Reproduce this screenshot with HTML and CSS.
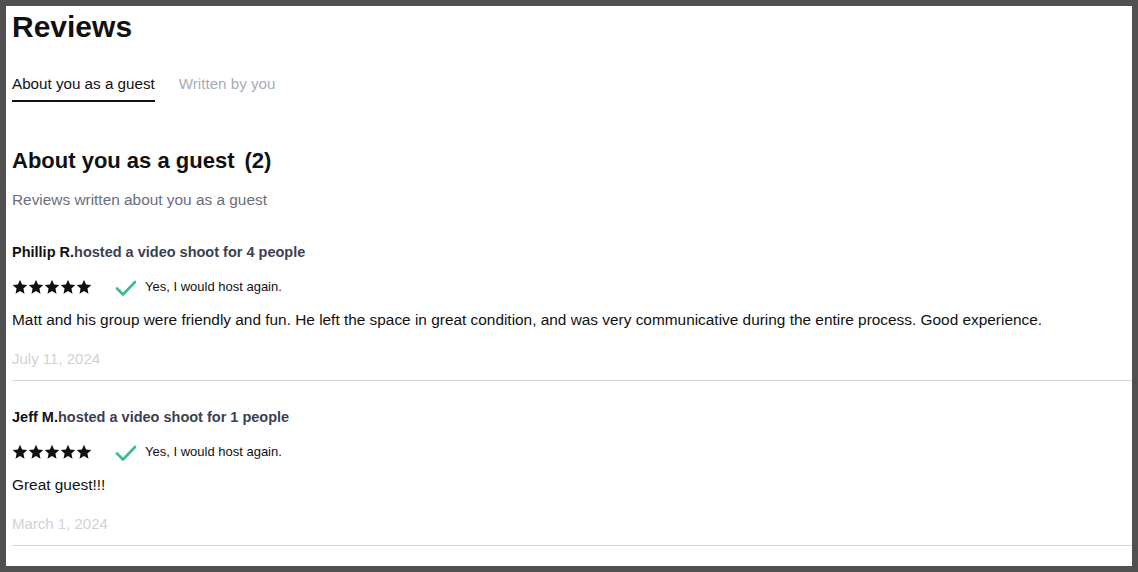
FILE: index.html
```html
<!DOCTYPE html>
<html lang="en">
<head>
<meta charset="utf-8">
<title>Reviews</title>
<link rel="stylesheet" href="styles.css">
</head>
<body>
<main class="page">
  <h1 class="title">Reviews</h1>
  <nav class="tabs">
    <span class="tab active">About you as a guest</span>
    <span class="tab">Written by you</span>
  </nav>
  <h2 class="heading">About you as a guest<span class="count">(2)</span></h2>
  <p class="subtitle">Reviews written about you as a guest</p>

  <article class="review">
    <div class="who"><span class="name">Phillip R.</span>hosted a video shoot for 4 people</div>
    <div class="meta">
      <svg class="stars" width="80" height="16" viewBox="0 0 80 16" aria-hidden="true">
        <g fill="#111">
          <path id="st" d="M8 0.8 L10.1 5.6 L15.3 6.1 L11.4 9.6 L12.5 14.8 L8 12.1 L3.5 14.8 L4.6 9.6 L0.7 6.1 L5.9 5.6 Z"/>
          <use href="#st" x="16"/>
          <use href="#st" x="32"/>
          <use href="#st" x="48"/>
          <use href="#st" x="64"/>
        </g>
      </svg>
      <svg class="check" width="22" height="18" viewBox="0 0 22 18" aria-hidden="true">
        <path d="M2 9.5 L8 15.5 L20 3" fill="none" stroke="#3dba8b" stroke-width="2.6" stroke-linecap="round" stroke-linejoin="round"/>
      </svg>
      <span class="again">Yes, I would host again.</span>
    </div>
    <p class="text">Matt and his group were friendly and fun. He left the space in great condition, and was very communicative during the entire process. Good experience.</p>
    <div class="date">July 11, 2024</div>
  </article>

  <article class="review">
    <div class="who"><span class="name">Jeff M.</span>hosted a video shoot for 1 people</div>
    <div class="meta">
      <svg class="stars" width="80" height="16" viewBox="0 0 80 16" aria-hidden="true">
        <g fill="#111">
          <path id="st2" d="M8 0.8 L10.1 5.6 L15.3 6.1 L11.4 9.6 L12.5 14.8 L8 12.1 L3.5 14.8 L4.6 9.6 L0.7 6.1 L5.9 5.6 Z"/>
          <use href="#st2" x="16"/>
          <use href="#st2" x="32"/>
          <use href="#st2" x="48"/>
          <use href="#st2" x="64"/>
        </g>
      </svg>
      <svg class="check" width="22" height="18" viewBox="0 0 22 18" aria-hidden="true">
        <path d="M2 9.5 L8 15.5 L20 3" fill="none" stroke="#3dba8b" stroke-width="2.6" stroke-linecap="round" stroke-linejoin="round"/>
      </svg>
      <span class="again">Yes, I would host again.</span>
    </div>
    <p class="text">Great guest!!!</p>
    <div class="date">March 1, 2024</div>
  </article>
</main>
</body>
</html>
```
FILE: styles.css
```css
* { box-sizing: border-box; }
html, body { margin: 0; padding: 0; }
body {
  background: #505050;
  padding: 6px;
  font-family: "Liberation Sans", Arial, sans-serif;
  color: #111;
}
.page {
  background: #fff;
  height: 560px;
  padding: 1px 0 0 6px;
  overflow: hidden;
}
.title {
  margin: 0;
  font-size: 30px;
  line-height: 40px;
  font-weight: 700;
}
.tabs {
  display: flex;
  gap: 24px;
  margin-top: 27px;
}
.tab {
  font-size: 15.2px;
  line-height: 20px;
  padding-bottom: 6px;
  color: #a9abb8;
  border-bottom: 2px solid transparent;
}
.tab.active {
  color: #111;
  border-bottom-color: #111;
}
.heading {
  margin: 45px 0 0;
  font-size: 22px;
  line-height: 28px;
  font-weight: 700;
}
.count { margin-left: 10px; }
.subtitle {
  margin: 15px 0 0;
  font-size: 15.4px;
  line-height: 20px;
  color: #6b6e7a;
}
.review {
  padding: 26px 0 11px;
  border-bottom: 1px solid #d4d5db;
}
.subtitle + .review { padding-top: 32px; }
.who {
  font-size: 14.5px;
  line-height: 20px;
  font-weight: 700;
  color: #3c3f50;
}
.name { color: #111; }
.meta {
  display: flex;
  align-items: center;
  height: 20px;
  margin-top: 15px;
}
.stars { display: block; }
.check { display: block; margin-left: 23px; margin-top: 2px; }
.again {
  margin-left: 8px;
  font-size: 13px;
  line-height: 20px;
}
.text {
  margin: 13px 0 0;
  font-size: 15.4px;
  line-height: 20px;
}
.date {
  margin-top: 19px;
  font-size: 15px;
  line-height: 20px;
  color: #cfd1d9;
}
```
